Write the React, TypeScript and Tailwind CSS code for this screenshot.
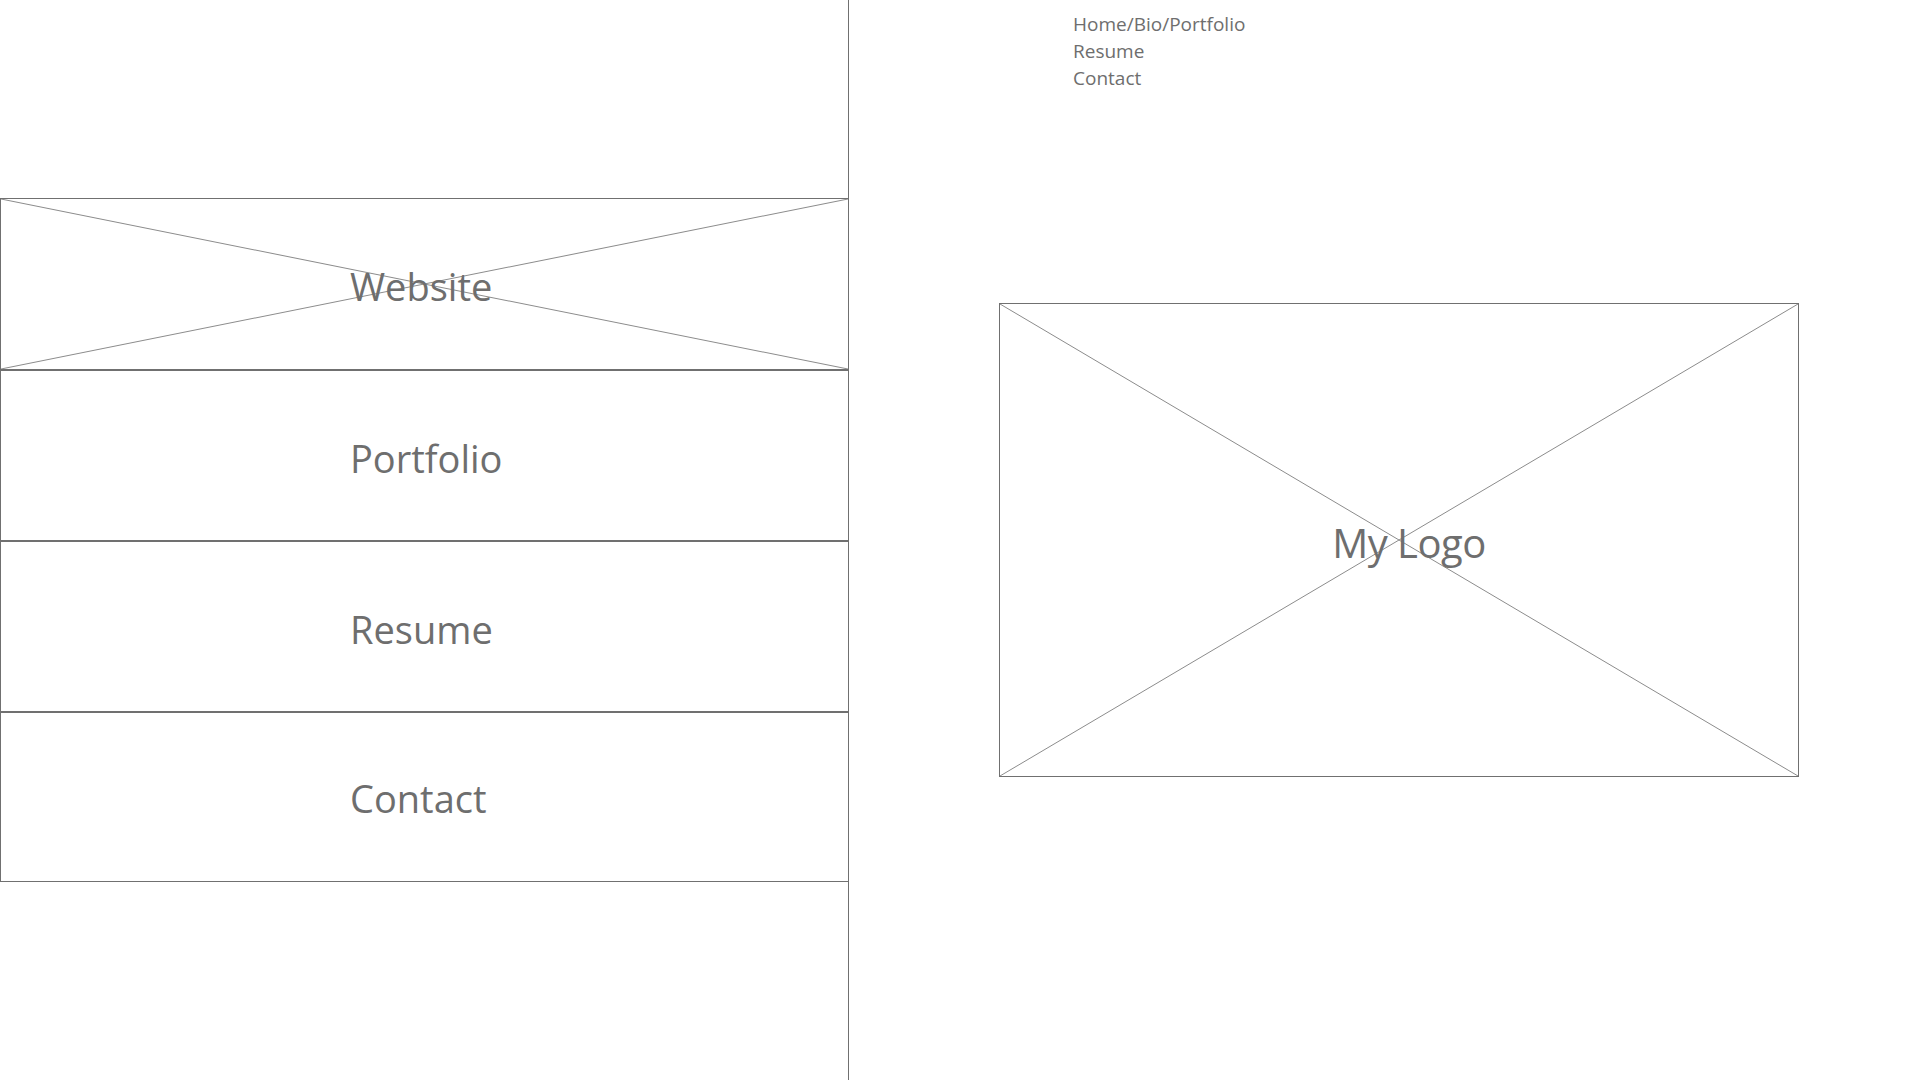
import React from "react";

const font = { fontFamily: '"Open Sans", "Noto Sans", sans-serif' };

const Cross: React.FC = () => (
  <svg className="absolute inset-0 h-full w-full" preserveAspectRatio="none" viewBox="0 0 100 100">
    <line x1="0" y1="0" x2="100" y2="100" stroke="#8c8c8c" strokeWidth="1" vectorEffect="non-scaling-stroke" />
    <line x1="100" y1="0" x2="0" y2="100" stroke="#8c8c8c" strokeWidth="1" vectorEffect="non-scaling-stroke" />
  </svg>
);

const rows = [
  { label: "Website", cls: "h-[173px] border-t border-b-2" },
  { label: "Portfolio", cls: "h-[171px] border-b-2" },
  { label: "Resume", cls: "h-[171px] border-b-2" },
  { label: "Contact", cls: "h-[169px] border-b pb-[2px]" },
];

const App: React.FC = () => {
  return (
    <div className="flex h-[1080px] w-[1920px] overflow-hidden bg-white text-[#6e6e6e]" style={font}>
      {/* left column */}
      <div className="flex w-[849px] shrink-0 flex-col border-r border-[#707070]">
        <div className="h-[198px]" />
        {rows.map((row, i) => (
          <div
            key={row.label}
            className={`relative flex items-center border-l border-[#707070] pl-[349px] pt-[4px] text-[38px] ${row.cls}`}
          >
            {i === 0 && <Cross />}
            <span className="relative leading-none">{row.label}</span>
          </div>
        ))}
      </div>

      {/* right column */}
      <div className="flex flex-1 flex-col">
        <nav className="flex flex-col pl-[224px] pt-[11px] text-[19px] leading-[27px]">
          <span>Home/Bio/Portfolio</span>
          <span>Resume</span>
          <span>Contact</span>
        </nav>
        <div className="relative ml-[150px] mt-[211px] flex h-[474px] w-[800px] items-center justify-center border border-[#707070] pl-[20px] pt-[6px]">
          <Cross />
          <span className="relative text-[40px] leading-none tracking-[-0.5px]">My Logo</span>
        </div>
      </div>
    </div>
  );
};

export default App;
